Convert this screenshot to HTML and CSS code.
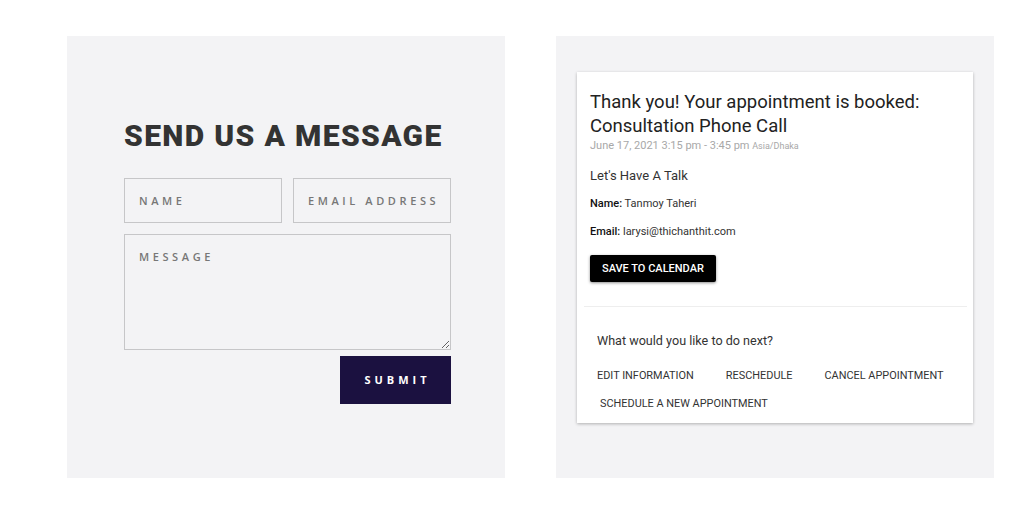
FILE: index.html
```html
<!DOCTYPE html>
<html lang="en">
<head>
<meta charset="utf-8">
<title>Contact and booking</title>
<link rel="stylesheet" href="styles.css">
</head>
<body>
<main class="page">
  <section class="panel panel-form">
    <h1 class="form-title">SEND US A MESSAGE</h1>
    <form class="contact-form">
      <div class="row">
        <input class="field" type="text" placeholder="NAME">
        <input class="field" type="email" placeholder="EMAIL ADDRESS">
      </div>
      <textarea class="field field-message" placeholder="MESSAGE"></textarea>
      <div class="actions-right">
        <button class="submit" type="button">SUBMIT</button>
      </div>
    </form>
  </section>

  <section class="panel panel-booking">
    <div class="card">
      <div class="card-top">
        <h2 class="card-title">Thank you! Your appointment is booked:<span class="service">Consultation Phone Call</span></h2>
        <div class="when">June 17, 2021 3:15 pm - 3:45 pm <span class="tz">Asia/Dhaka</span></div>
        <div class="talk">Let's Have A Talk</div>
        <div class="info"><b>Name:</b> Tanmoy Taheri</div>
        <div class="info"><b>Email:</b> larysi@thichanthit.com</div>
        <button class="save" type="button">SAVE TO CALENDAR</button>
      </div>
      <div class="card-bottom">
        <div class="next">What would you like to do next?</div>
        <div class="next-actions">
          <span class="link">EDIT INFORMATION</span>
          <span class="link">RESCHEDULE</span>
          <span class="link">CANCEL APPOINTMENT</span>
          <span class="link link-new">SCHEDULE A NEW APPOINTMENT</span>
        </div>
      </div>
    </div>
  </section>
</main>
</body>
</html>
```

FILE: styles.css
```css
* { box-sizing: border-box; }

html, body {
  margin: 0;
  background: #ffffff;
}

.page {
  display: flex;
  gap: 51px;
  padding: 36px 0 0 67px;
}

.panel {
  width: 438px;
  height: 442px;
  background: #f3f3f5;
}

/* ---------- left: contact form ---------- */
.panel-form {
  padding: 82px 54px 0 57px;
}

.form-title {
  margin: 0;
  font-family: Roboto, "Liberation Sans", sans-serif;
  font-weight: 900;
  font-size: 30px;
  line-height: 36px;
  letter-spacing: 1.35px;
  color: #333333;
  white-space: nowrap;
}

.contact-form {
  margin-top: 24px;
  display: flex;
  flex-direction: column;
}

.row {
  display: grid;
  grid-template-columns: 158px 158px;
  gap: 11px;
}

.field {
  display: block;
  height: 45px;
  margin: 0;
  padding: 0 14px;
  border: 1px solid #c6c6c8;
  border-radius: 0;
  background: transparent;
  font-family: "Open Sans", "Liberation Sans", sans-serif;
  font-weight: 600;
  font-size: 11px;
  letter-spacing: 3.6px;
  color: #555;
  outline: none;
}

.field::placeholder {
  color: #777777;
  opacity: 1;
}

.field-message {
  width: 327px;
  height: 116px;
  margin-top: 11px;
  padding: 14px 14px;
  line-height: 16px;
  resize: vertical;
}

.actions-right {
  display: flex;
  justify-content: flex-end;
  margin-top: 6px;
}

.submit {
  width: 111px;
  height: 48px;
  border: 0;
  background: #1b1140;
  color: #ffffff;
  font-family: "Open Sans", "Liberation Sans", sans-serif;
  font-weight: 700;
  font-size: 11px;
  letter-spacing: 4px;
  padding: 0 0 2px 4px;
}

/* ---------- right: booking confirmation ---------- */
.panel-booking {
  padding: 36px 21px 0 21px;
}

.card {
  background: #ffffff;
  box-shadow: 0 1px 3px rgba(0, 0, 0, 0.28);
  padding: 0 6px 0 7px;
  font-family: Roboto, "Liberation Sans", sans-serif;
  color: #333333;
}

.card-top {
  padding: 18px 6px 24px 6px;
  border-bottom: 1px solid #eeeeee;
}

.card-title {
  margin: 0;
  font-weight: 400;
  font-size: 18.5px;
  line-height: 24px;
  color: #222222;
}

.service {
  display: block;
}

.when {
  margin-top: 2px;
  font-size: 11px;
  line-height: 12px;
  color: #a8a8a8;
}

.tz {
  font-size: 9px;
}

.talk {
  margin-top: 16px;
  font-size: 13px;
  line-height: 16px;
  color: #333333;
}

.info {
  margin-top: 13px;
  font-size: 11px;
  line-height: 14px;
  color: #333333;
}

.info + .info {
  margin-top: 14px;
}

.info b {
  font-weight: 500;
  color: #111111;
}

.save {
  display: block;
  margin-top: 16px;
  height: 27px;
  padding: 0 12px;
  border: 0;
  border-radius: 2px;
  background: #000000;
  color: #ffffff;
  font-family: Roboto, "Liberation Sans", sans-serif;
  font-weight: 500;
  font-size: 11px;
  box-shadow: 0 1px 3px rgba(0, 0, 0, 0.45);
}

.card-bottom {
  padding: 26px 13px 5px 13px;
}

.next {
  font-size: 12.6px;
  line-height: 16px;
  color: #333333;
}

.next-actions {
  margin-top: 13px;
  display: flex;
  flex-wrap: wrap;
  column-gap: 32px;
}

.link {
  font-size: 10.9px;
  line-height: 28px;
  color: #333333;
}

.link-new {
  margin-left: 3px;
}
```
